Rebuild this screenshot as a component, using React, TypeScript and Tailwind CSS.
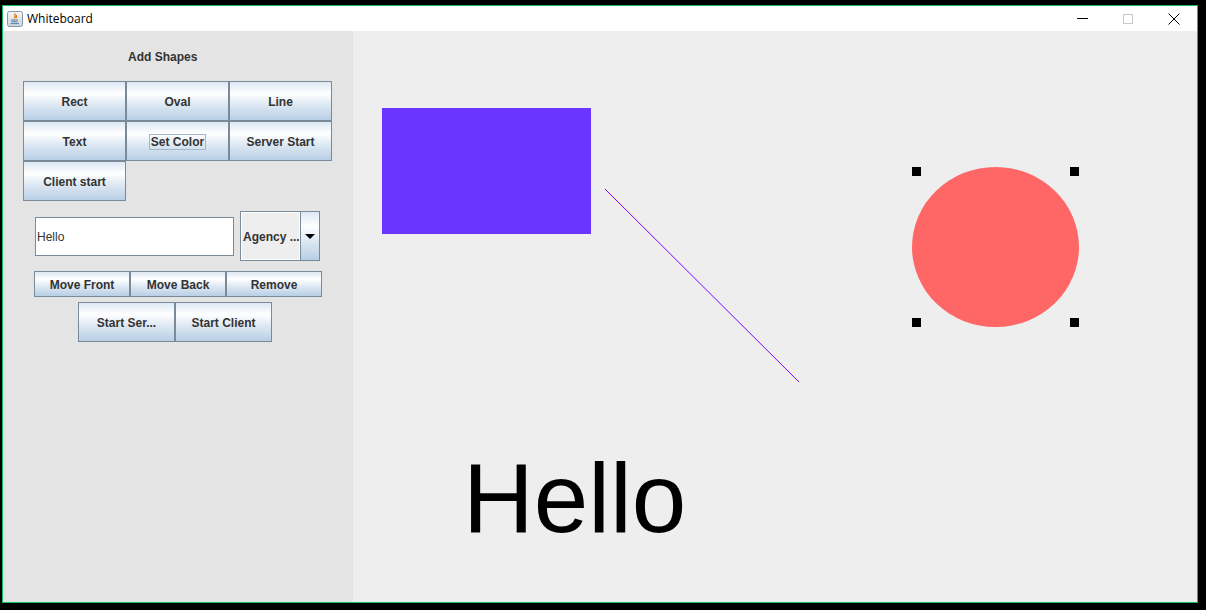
import React from 'react';

const font = "font-['Liberation_Sans',Arial,sans-serif]";
const btn =
  'flex items-center justify-center border border-[#7a8a99] bg-[linear-gradient(to_bottom,#dde8f3_0%,#ffffff_30%,#dde8f3_60%,#b8cfe5_100%)] pt-[2px] text-[12px] font-bold text-[#333333] leading-none whitespace-nowrap';

const JavaIcon = () => (
  <svg width="16" height="16" viewBox="0 0 16 16">
    <defs>
      <linearGradient id="jg" x1="0" y1="0" x2="0" y2="1">
        <stop offset="0" stopColor="#f4f6f8" />
        <stop offset="1" stopColor="#c9d2dc" />
      </linearGradient>
    </defs>
    <rect x="0.5" y="0.5" width="15" height="15" rx="2" fill="url(#jg)" stroke="#8a96a3" />
    <path d="M8.5 2.5 C6.5 4.5 9.5 5 7.5 7.5 M9.8 4.2 C8.8 5.2 10.2 5.6 9 7" stroke="#e76f00" strokeWidth="1.2" fill="none" />
    <path d="M4 9 H11 M4.5 10.7 H10.5 M3.5 12.6 H12" stroke="#5382a1" strokeWidth="1" />
  </svg>
);

const TitleBar = () => (
  <div className="flex h-[25px] items-center bg-white">
    <div className="ml-[4px]">
      <JavaIcon />
    </div>
    <span className="ml-[4px] font-['Open_Sans',sans-serif] text-[12px] text-black">Whiteboard</span>
    <div className="ml-auto flex h-full items-center">
      <div className="flex w-[46px] justify-center">
        <div className="h-px w-[11px] bg-black" />
      </div>
      <div className="flex w-[46px] justify-center">
        <div className="h-[10px] w-[10px] border border-[#c8c8c8]" />
      </div>
      <div className="flex w-[46px] justify-center">
        <svg width="12" height="12" viewBox="0 0 12 12">
          <path d="M0.5 0.5 L11.5 11.5 M11.5 0.5 L0.5 11.5" stroke="#000" strokeWidth="1" />
        </svg>
      </div>
    </div>
  </div>
);

const SidePanel = () => (
  <div className={`flex w-[350px] flex-col bg-[#e4e4e4] ${font}`}>
    <div className="mt-[19px] h-[14px] pl-[125px] text-[12px] font-bold leading-[14px] text-[#333333]">Add Shapes</div>
    <div className="ml-[20px] mt-[17px] grid w-[309px] grid-cols-3">
      <div className={`${btn} h-[40px]`}>Rect</div>
      <div className={`${btn} h-[40px]`}>Oval</div>
      <div className={`${btn} h-[40px]`}>Line</div>
      <div className={`${btn} h-[40px]`}>Text</div>
      <div className={`${btn} h-[40px]`}>
        <span className="border border-[#a3b8cc] px-px py-[1px]">Set Color</span>
      </div>
      <div className={`${btn} h-[40px]`}>Server Start</div>
      <div className={`${btn} h-[40px]`}>Client start</div>
    </div>
    <div className="mt-[10px] flex h-[50px] items-center pl-[32px]">
      <div className="flex h-[39px] w-[199px] items-center border border-[#7a8a99] bg-white pl-[1px] pt-[2px] text-[12px] text-[#333333]">
        Hello
      </div>
      <div className="ml-[6px] flex h-[50px] w-[80px] border border-[#7a8a99]">
        <div className="flex flex-1 items-center overflow-hidden whitespace-nowrap border border-white bg-[#eeeeee] pl-px pt-[2px] text-[12px] font-bold text-[#333333]">
          Agency ...
        </div>
        <div className="flex w-[19px] items-center justify-center border-l border-[#7a8a99] bg-[linear-gradient(to_bottom,#dde8f3_0%,#ffffff_30%,#dde8f3_60%,#b8cfe5_100%)]">
          <svg width="10" height="5" viewBox="0 0 10 5">
            <path d="M0 0 H10 L5 5 Z" fill="#000" />
          </svg>
        </div>
      </div>
    </div>
    <div className="mt-[10px] flex pl-[31px]">
      <div className={`${btn} h-[26px] w-[96px]`}>Move Front</div>
      <div className={`${btn} h-[26px] w-[96px]`}>Move Back</div>
      <div className={`${btn} h-[26px] w-[96px]`}>Remove</div>
    </div>
    <div className="mt-[5px] flex pl-[75px]">
      <div className={`${btn} h-[40px] w-[97px]`}>Start Ser...</div>
      <div className={`${btn} h-[40px] w-[97px]`}>Start Client</div>
    </div>
  </div>
);

const Canvas = () => (
  <div className="relative flex-1 overflow-hidden bg-[#eeeeee]">
    <svg className="absolute left-0 top-0" width="844" height="571">
      <rect x="29" y="77" width="209" height="126" fill="#6a35ff" />
      <line x1="252" y1="158" x2="446" y2="351" stroke="#8000ff" strokeWidth="1" />
      <ellipse cx="642.5" cy="216" rx="83.5" ry="80" fill="#ff6666" />
      <rect x="559" y="136" width="9" height="9" fill="#000" />
      <rect x="717" y="136" width="9" height="9" fill="#000" />
      <rect x="559" y="287" width="9" height="9" fill="#000" />
      <rect x="717" y="287" width="9" height="9" fill="#000" />
    </svg>
    <div className={`absolute left-[110px] top-[418px] text-[98px] leading-none text-black ${font}`}>Hello</div>
  </div>
);

export default function App() {
  return (
    <div className="h-[610px] w-[1206px] bg-black pl-[2px] pt-[5px]">
      <div className="flex h-[598px] w-[1196px] flex-col border border-[#10c060]">
        <TitleBar />
        <div className="flex flex-1">
          <SidePanel />
          <Canvas />
        </div>
      </div>
    </div>
  );
}
